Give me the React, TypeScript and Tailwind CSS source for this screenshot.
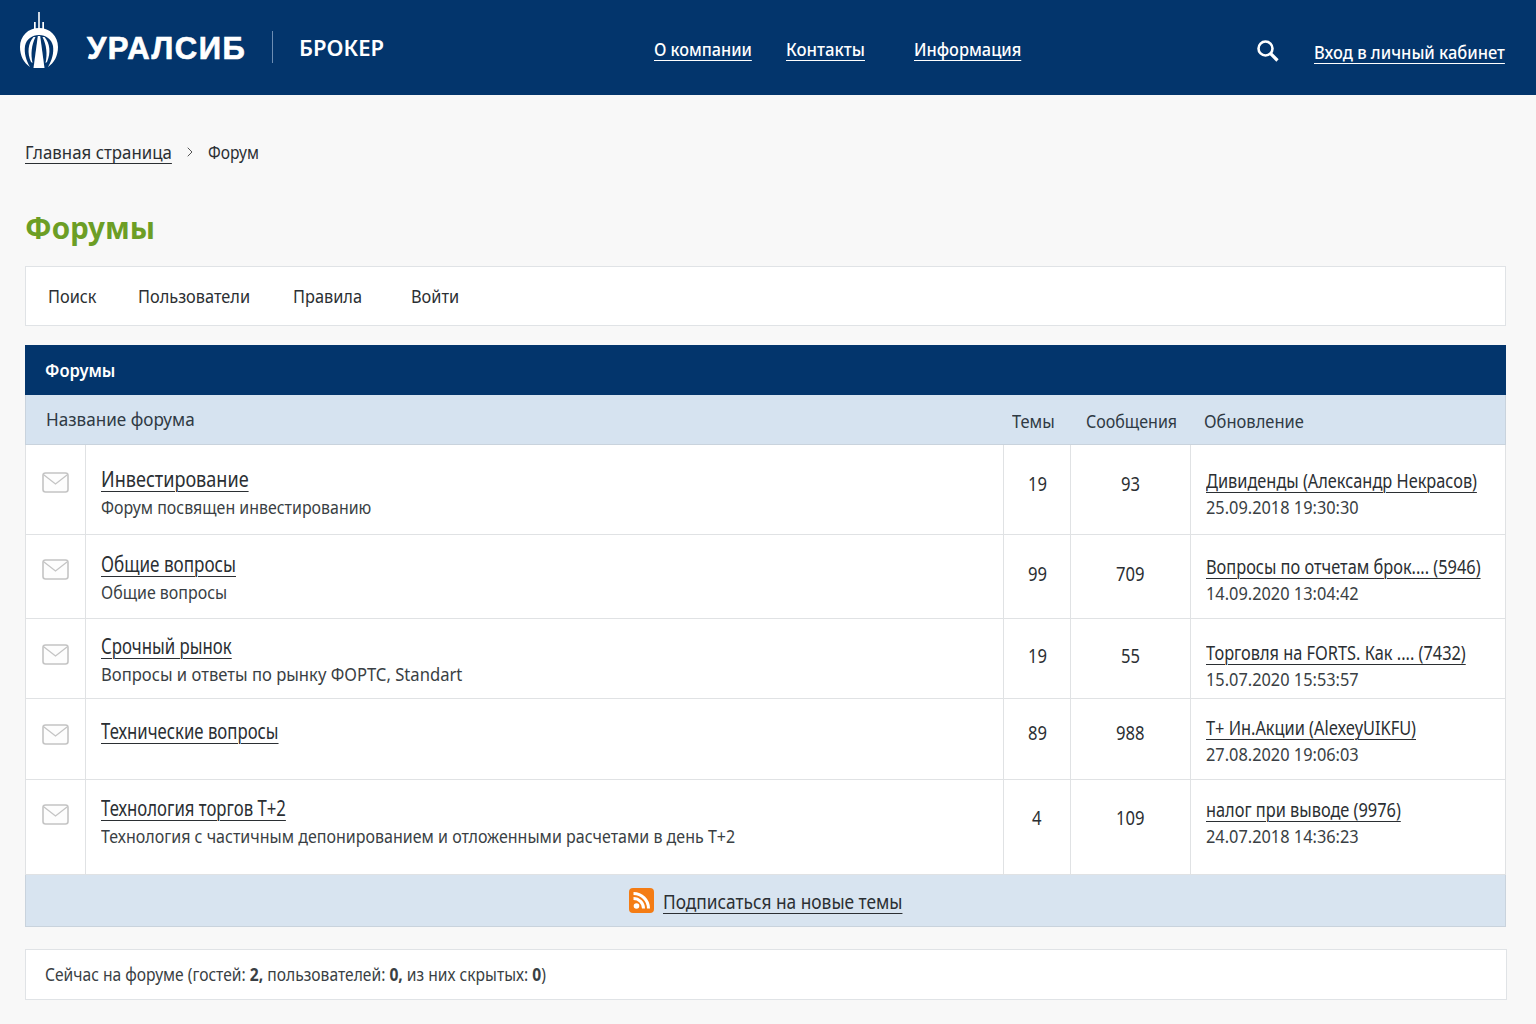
import React from 'react';
import { ChevronRight } from 'lucide-react';

interface ForumRow {
    title: string;
    titleScale: string;
    desc?: string;
    descScale?: string;
    topics: string;
    posts: string;
    last: string;
    date: string;
    h: string;
    iconPt: string;
    titlePt: string;
    lastPt: string;
    numPb: string;
}

const rows: ForumRow[] = [
    { title: 'Инвестирование', titleScale: 'scale-x-[0.86]', desc: 'Форум посвящен инвестированию', descScale: 'scale-x-[0.885]', topics: '19', posts: '93', last: 'Дивиденды (Александр Некрасов)', date: '25.09.2018 19:30:30', h: 'h-[91px]', iconPt: 'pt-[27px]', titlePt: 'pt-[20px]', lastPt: 'pt-[23px]', numPb: 'pb-[11px]' },
    { title: 'Общие вопросы', titleScale: 'scale-x-[0.813]', desc: 'Общие вопросы', descScale: 'scale-x-[0.887]', topics: '99', posts: '709', last: 'Вопросы по отчетам брок.... (5946)', date: '14.09.2020 13:04:42', h: 'h-[84px]', iconPt: 'pt-[24px]', titlePt: 'pt-[15px]', lastPt: 'pt-[19px]', numPb: 'pb-[6px]' },
    { title: 'Срочный рынок', titleScale: 'scale-x-[0.8]', desc: 'Вопросы и ответы по рынку ФОРТС, Standart', descScale: 'scale-x-[0.923]', topics: '19', posts: '55', last: 'Торговля на FORTS. Как .... (7432)', date: '15.07.2020 15:53:57', h: 'h-[80px]', iconPt: 'pt-[25px]', titlePt: 'pt-[13px]', lastPt: 'pt-[21px]', numPb: 'pb-[6px]' },
    { title: 'Технические вопросы', titleScale: 'scale-x-[0.797]', topics: '89', posts: '988', last: 'T+ Ин.Акции (AlexeyUIKFU)', date: '27.08.2020 19:06:03', h: 'h-[81px]', iconPt: 'pt-[25px]', titlePt: 'pt-[18px]', lastPt: 'pt-[16px]', numPb: 'pb-[12px]' },
    { title: 'Технология торгов Т+2', titleScale: 'scale-x-[0.797]', desc: 'Технология с частичным депонированием и отложенными расчетами в день Т+2', descScale: 'scale-x-[0.89]', topics: '4', posts: '109', last: 'налог при выводе (9976)', date: '24.07.2018 14:36:23', h: 'h-[95px]', iconPt: 'pt-[24px]', titlePt: 'pt-[14px]', lastPt: 'pt-[17px]', numPb: 'pb-[18px]' },
];

// squeezed text: the reference face is narrower than any installed one
const Sq = ({ className, children }: { className: string; children: React.ReactNode }) => (
    <span className={`inline-block origin-left whitespace-nowrap ${className}`}>{children}</span>
);

const Logo = () => (
    <svg width="40" height="58" viewBox="0 0 40 58" fill="#fff">
        <path d="M19.200 0h1.600v20h-1.600zM15 10h1.700v11H15zM23.300 10h1.700v11h-1.700z" />
        <path d="M20 16C9 16 1 24 1 35c0 9 4 16 10 20C7 48 5 41 6 34c1.500-7 7-11 14-11s12.500 4 14 11c1 7-1 14-5 21 6-4 10-11 10-20 0-11-8-19-19-19z" />
        <path d="M18.800 24h2.400l4.300 32h-11z" />
        <path d="M14.500 25C9 31 8 41 12 50l1.500 1c-2-9-1-18 3-26zM25.500 25c5.500 6 6.500 16 2.500 25l-1.500 1c2-9 1-18-3-26z" />
    </svg>
);

const Envelope = () => (
    <svg width="27" height="21" viewBox="0 0 27 21" fill="none" stroke="#c4c4c4">
        <rect x="1" y="1" width="25" height="19" rx="2.500" strokeWidth="1.600" fill="#fdfdfd" />
        <path d="M2 3l11.500 9L25 3" strokeWidth="1.300" />
    </svg>
);

const Rss = () => (
    <svg width="25" height="25" viewBox="0 0 25 25">
        <rect width="25" height="25" rx="4" fill="#f47c14" />
        <circle cx="7.500" cy="18" r="2.800" fill="#fff" />
        <path d="M4.500 10.500a10 10 0 0 1 10 10M4.500 5.500a15 15 0 0 1 15 15" fill="none" stroke="#fff" strokeWidth="3" />
    </svg>
);

const SearchIcon = () => (
    <svg width="23" height="23" viewBox="0 0 23 23" fill="none" stroke="#fff">
        <circle cx="9.500" cy="9.500" r="7" strokeWidth="2.600" />
        <path d="M14.500 14.500l7 7" strokeWidth="3.200" />
    </svg>
);

export default function App() {
    return (
        <div className="min-h-[1024px] bg-[#f8f8f8] font-['Noto_Sans',sans-serif] text-[#2b2f33] overflow-hidden">
            <header className="h-[95px] bg-[#03356c] flex items-center text-white">
                <div className="ml-[19px] w-[40px] -mt-[14px]"><Logo /></div>
                <div className="ml-[28px] w-[159px] text-[31px] font-bold font-['Liberation_Sans',sans-serif] [-webkit-text-stroke:0.7px_white] mt-[3px] tracking-[1.5px]">УРАЛСИБ</div>
                <div className="ml-[26px] w-px h-[32px] bg-[#6d8db3] -mt-[1px]"></div>
                <div className="ml-[26px] text-[22px] font-semibold -mt-[1px]">БРОКЕР</div>
                <nav className="ml-[270px] w-[400px] flex text-[18px] font-medium mt-[4px]">
                    <a className="w-[132px]"><Sq className="scale-x-[0.9] underline underline-offset-4 decoration-1">О компании</Sq></a>
                    <a className="w-[128px]"><Sq className="scale-x-[0.93] underline underline-offset-4 decoration-1">Контакты</Sq></a>
                    <a><Sq className="scale-x-[0.907] underline underline-offset-4 decoration-1">Информация</Sq></a>
                </nav>
                <div className="ml-[202px] mt-[5px]"><SearchIcon /></div>
                <a className="ml-[35px] text-[18px] font-medium mt-[10px]"><Sq className="scale-x-[0.914] underline underline-offset-4 decoration-1">Вход в личный кабинет</Sq></a>
            </header>

            <main className="pl-[25px] pr-[30px]">
                <div className="pt-[44px] h-[100px] flex items-start text-[18px]">
                    <a className="w-[148px]"><Sq className="scale-x-[0.936] underline underline-offset-4 decoration-1">Главная страница</Sq></a>
                    <ChevronRight size={16} strokeWidth={1.5} className="ml-[9px] mt-[5px] text-[#555]" />
                    <span className="ml-[10px]"><Sq className="scale-x-[0.865]">Форум</Sq></span>
                </div>
                <h1 className="text-[31px] leading-[42px] font-bold text-[#6c9e25] mt-[11px]"><Sq className="scale-x-[0.955]">Форумы</Sq></h1>

                <div className="mt-[18px] h-[60px] bg-white border border-[#e0e3e6] flex items-center pl-[22px] text-[18px]">
                    <span className="w-[90px]"><Sq className="scale-x-[0.907]">Поиск</Sq></span>
                    <span className="w-[155px]"><Sq className="scale-x-[0.907]">Пользователи</Sq></span>
                    <span className="w-[118px]"><Sq className="scale-x-[0.907]">Правила</Sq></span>
                    <span><Sq className="scale-x-[0.907]">Войти</Sq></span>
                </div>

                <section className="mt-[19px]">
                    <div className="h-[50px] bg-[#03356c] text-white text-[18px] font-semibold flex items-center pl-[20px]"><Sq className="scale-x-[0.92]">Форумы</Sq></div>
                    <div className="h-[50px] bg-[#d6e3f0] border-x border-b border-[#c9d3dd] flex items-center text-[18px] text-[#2f3a44]">
                        <div className="pl-[20px] flex-1"><Sq className="scale-x-[0.95]">Название форума</Sq></div>
                        <div className="w-[74px] pt-[3px]"><Sq className="scale-x-[0.915]">Темы</Sq></div>
                        <div className="w-[118px] pt-[3px]"><Sq className="scale-x-[0.89]">Сообщения</Sq></div>
                        <div className="w-[301px] pt-[3px]"><Sq className="scale-x-[0.917]">Обновление</Sq></div>
                    </div>
                    {rows.map((r, i) => (
                        <div key={r.title} className={`${i === 0 ? 'h-[90px]' : r.h} bg-white border-x border-b border-[#e0e2e4] grid grid-cols-[60px_918px_67px_120px_1fr]`}>
                            <div className={`border-r border-[#e0e2e4] flex justify-center items-start ${r.iconPt} pr-[1px]`}><Envelope /></div>
                            <div className={`border-r border-[#e0e2e4] pl-[15px] ${r.titlePt}`}>
                                <a className="text-[21px] leading-[28px] block"><Sq className={`${r.titleScale} underline underline-offset-4 decoration-1`}>{r.title}</Sq></a>
                                {r.desc && <div className="text-[18px] leading-[26px] mt-[1px] text-[#3a3f44]"><Sq className={r.descScale ?? ''}>{r.desc}</Sq></div>}
                            </div>
                            <div className={`border-r border-[#e0e2e4] flex items-center justify-center text-[20px] ${r.numPb}`}><span className="inline-block scale-x-[0.83]">{r.topics}</span></div>
                            <div className={`border-r border-[#e0e2e4] flex items-center justify-center text-[20px] ${r.numPb}`}><span className="inline-block scale-x-[0.83]">{r.posts}</span></div>
                            <div className={`pl-[15px] ${r.lastPt}`}>
                                <a className="text-[19px] leading-[26px] block"><Sq className="scale-x-[0.86] underline underline-offset-4 decoration-1">{r.last}</Sq></a>
                                <div className="text-[18px] leading-[27px] text-[#3a3f44]"><Sq className="scale-x-[0.908]">{r.date}</Sq></div>
                            </div>
                        </div>
                    ))}
                    <div className="h-[52px] bg-[#d8e4f0] border-x border-b border-[#c9d3dd] flex items-center justify-center">
                        <Rss />
                        <a className="ml-[9px] w-[239px] text-[20px] mt-[2px]"><Sq className="scale-x-[0.866] underline underline-offset-4 decoration-1">Подписаться на новые темы</Sq></a>
                    </div>
                </section>

                <div className="mt-[22px] w-[1482px] h-[51px] bg-white border border-[#e0e3e6] flex items-center pl-[19px] text-[18px] text-[#3a3f44]">
                    <Sq className="scale-x-[0.868]">Сейчас на форуме (гостей: <b>2,</b> пользователей: <b>0,</b> из них скрытых: <b>0</b>)</Sq>
                </div>
            </main>
        </div>
    );
}
